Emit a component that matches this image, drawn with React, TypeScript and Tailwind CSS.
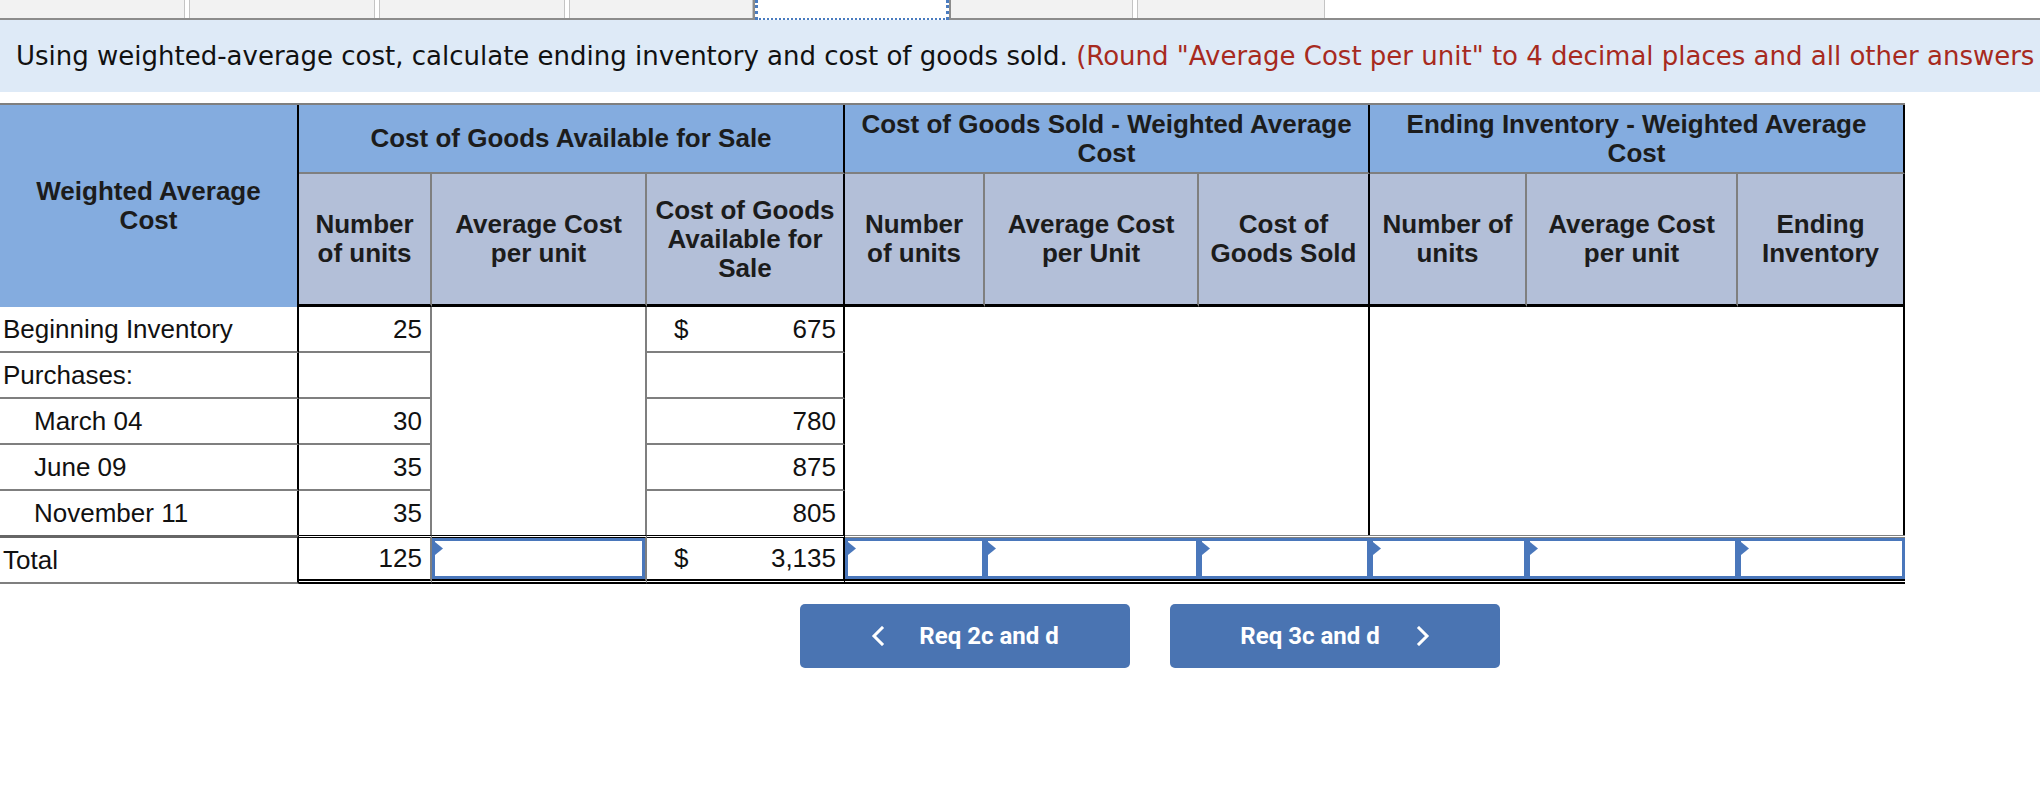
import React from "react";

const gridCols =
  "grid-cols-[299px_133px_215px_198px_140px_214px_171px_157px_211px_167px]";
const gridRows = "grid-rows-[69px_133px_46px_46px_46px_46px_44px_49px]";

function Field() {
  return (
    <div className="relative h-full w-full border-[3px] border-[#4a77bb] bg-white">
      <svg className="absolute left-0 top-[1px]" width="8" height="13" viewBox="0 0 8 13">
        <path d="M0 0L8 6.5L0 13Z" fill="#4a77bb" />
      </svg>
    </div>
  );
}

function Tabs() {
  return (
    <div className="flex h-[20px] border-b-2 border-[#8c8c8c]">
      <div className="h-full w-[185px] border-r border-[#c4c4c4] bg-[#f2f2f2]" />
      <div className="ml-[4px] h-full w-[186px] border-x border-[#c4c4c4] bg-[#f2f2f2]" />
      <div className="ml-[4px] h-full w-[186px] border-x border-[#c4c4c4] bg-[#f2f2f2]" />
      <div className="ml-[4px] h-full w-[184px] border-x border-[#c4c4c4] bg-[#f2f2f2]" />
      <div className="-mb-[2px] h-[20px] w-[198px] border-x-2 border-[#8c8c8c] bg-white">
        <div className="h-full w-full border-x-[3px] border-b-2 border-dotted border-[#4a7cc0]" />
      </div>
      <div className="h-full w-[182px] border-r border-[#c4c4c4] bg-[#f2f2f2]" />
      <div className="ml-[4px] h-full w-[188px] border-x border-[#c4c4c4] bg-[#f2f2f2]" />
    </div>
  );
}

const hdr =
  "flex items-center justify-center text-center font-bold leading-[29px] text-[#1c1c1c] whitespace-nowrap";
const sub = `${hdr} bg-[#b3bfd8] border-b-[3px] border-black`;

const rows = [
  { label: "Beginning Inventory", indent: false, units: "25", dollar: true, cost: "675" },
  { label: "Purchases:", indent: false, units: "", dollar: false, cost: "" },
  { label: "March 04", indent: true, units: "30", dollar: false, cost: "780" },
  { label: "June 09", indent: true, units: "35", dollar: false, cost: "875" },
  { label: "November 11", indent: true, units: "35", dollar: false, cost: "805" },
];

function InventoryTable() {
  return (
    <div
      className={`mt-[11px] grid w-[1905px] ${gridCols} ${gridRows} border-t-2 border-[#7f7f7f] font-['Liberation_Sans',Arial,sans-serif] text-[26px] text-[#111]`}
    >
      {/* header row 1 */}
      <div className={`${hdr} row-span-2 bg-[#84acdf] border-r-2 border-black`}>
        Weighted Average
        <br />
        Cost
      </div>
      <div className={`${hdr} col-span-3 bg-[#84acdf] border-r-2 border-r-black border-b-2 border-b-[#7f7f7f]`}>
        Cost of Goods Available for Sale
      </div>
      <div className={`${hdr} col-span-3 bg-[#84acdf] border-r-2 border-r-black border-b-2 border-b-[#7f7f7f]`}>
        <span>
          Cost of Goods Sold - Weighted Average
          <br />
          Cost
        </span>
      </div>
      <div className={`${hdr} col-span-3 bg-[#84acdf] border-r-2 border-r-black border-b-2 border-b-[#7f7f7f]`}>
        <span>
          Ending Inventory - Weighted Average
          <br />
          Cost
        </span>
      </div>

      {/* header row 2 */}
      <div className={`${sub} border-r-2 border-r-[#7f7f7f]`}>
        <span>Number<br />of units</span>
      </div>
      <div className={`${sub} border-r-2 border-r-[#7f7f7f]`}>
        <span>Average Cost<br />per unit</span>
      </div>
      <div className={`${sub} border-r-2 border-r-black`}>
        <span>Cost of Goods<br />Available for<br />Sale</span>
      </div>
      <div className={`${sub} border-r-2 border-r-[#7f7f7f]`}>
        <span>Number<br />of units</span>
      </div>
      <div className={`${sub} border-r-2 border-r-[#7f7f7f]`}>
        <span>Average Cost<br />per Unit</span>
      </div>
      <div className={`${sub} border-r-2 border-r-black`}>
        <span>Cost of<br />Goods Sold</span>
      </div>
      <div className={`${sub} border-r-2 border-r-[#7f7f7f]`}>
        <span>Number of<br />units</span>
      </div>
      <div className={`${sub} border-r-2 border-r-[#7f7f7f]`}>
        <span>Average Cost<br />per unit</span>
      </div>
      <div className={`${sub} border-r-2 border-r-black`}>
        <span>Ending<br />Inventory</span>
      </div>

      {/* body */}
      {rows.map((r, i) => {
        const last = i === rows.length - 1;
        const bottom = last ? "" : "border-b-2 border-b-[#7f7f7f]";
        return (
          <React.Fragment key={r.label}>
            <div
              className={`flex items-center border-r-2 border-r-black ${bottom} ${r.indent ? "pl-[34px]" : "pl-[3px]"}`}
            >
              {r.label}
            </div>
            <div className={`flex items-center justify-end pr-[8px] border-r-2 border-r-[#7f7f7f] ${bottom}`}>
              {r.units}
            </div>
            {i === 0 && <div className="row-span-5 border-r-2 border-r-[#7f7f7f]" />}
            <div
              className={`flex items-center pl-[27px] pr-[7px] border-r-2 border-r-black ${bottom} ${r.dollar ? "justify-between" : "justify-end"}`}
            >
              {r.dollar && <span>$</span>}
              <span>{r.cost}</span>
            </div>
            {i === 0 && (
              <>
                <div className="col-span-3 row-span-5 border-r-2 border-r-black" />
                <div className="col-span-3 row-span-5 border-r-2 border-r-black" />
              </>
            )}
          </React.Fragment>
        );
      })}

      {/* total row */}
      <div className="flex items-center pl-[3px] border-r-2 border-r-black border-t-[3px] border-t-[#666] border-b-2 border-b-[#7f7f7f]">
        Total
      </div>
      <div className="flex items-center justify-end pr-[8px] border-r-2 border-r-[#7f7f7f] border-t-[3px] border-t-black border-b-[5px] border-b-black border-double">
        125
      </div>
      <div className="border-r-2 border-r-[#7f7f7f] border-t-[3px] border-t-black border-b-[5px] border-b-black border-double">
        <Field />
      </div>
      <div className="flex items-center justify-between pl-[27px] pr-[7px] border-r-2 border-r-black border-t-[3px] border-t-black border-b-[5px] border-b-black border-double">
        <span>$</span>
        <span>3,135</span>
      </div>
      {[0, 1, 2, 3, 4, 5].map((k) => (
        <div key={k} className="border-t-[3px] border-t-[#7f7f7f] border-b-[5px] border-b-black border-double">
          <Field />
        </div>
      ))}
    </div>
  );
}

function Chevron({ dir }: { dir: "left" | "right" }) {
  return (
    <svg width="14" height="20" viewBox="0 0 14 20" fill="none">
      <path
        d={dir === "left" ? "M11 2L3 10L11 18" : "M3 2L11 10L3 18"}
        stroke="white"
        strokeWidth="3"
        strokeLinecap="square"
      />
    </svg>
  );
}

export default function App() {
  return (
    <div className="h-[796px] w-[2040px] overflow-hidden bg-white">
      <Tabs />

      {/* instructions banner */}
      <div className="flex h-[72px] items-center overflow-hidden whitespace-nowrap bg-[#deeaf7] pl-[16px] font-['DejaVu_Sans',Verdana,sans-serif] text-[26px] text-[#111]">
        <span>
          Using weighted-average cost, calculate ending inventory and cost of goods sold.{" "}
          <span className="text-[#a72a20]">
            (Round "Average Cost per unit" to 4 decimal places and all other answers
          </span>
        </span>
      </div>

      <InventoryTable />

      <div className="mt-[20px] flex gap-[40px] pl-[800px] font-['Roboto',sans-serif] text-[24px] font-bold text-white">
        <button className="flex h-[64px] w-[330px] items-center justify-center gap-[34px] rounded-[5px] bg-[#4a74b2]">
          <Chevron dir="left" />
          <span>Req 2c and d</span>
        </button>
        <button className="flex h-[64px] w-[330px] items-center justify-center gap-[36px] rounded-[5px] bg-[#4a74b2]">
          <span>Req 3c and d</span>
          <Chevron dir="right" />
        </button>
      </div>
    </div>
  );
}
